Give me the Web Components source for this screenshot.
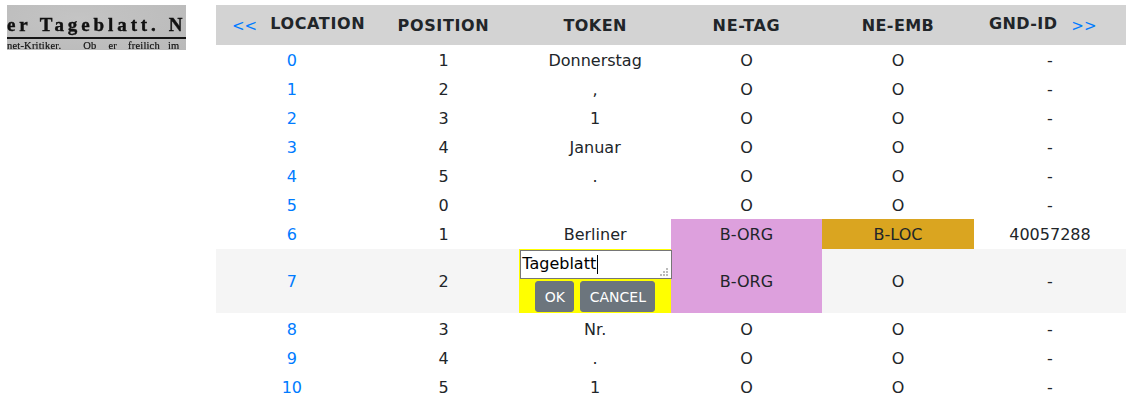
<!DOCTYPE html>
<html><head><meta charset="utf-8"><style>
html,body{margin:0;padding:0;background:#fff}
body{font-family:"DejaVu Sans",sans-serif;font-size:16px;color:#212529;width:1130px;height:400px;overflow:hidden}
</style></head><body>
<ner-app>
  <scan-thumb slot="thumb"></scan-thumb>
  <ner-table slot="table">
    <ner-head></ner-head>
    <ner-row loc="0" pos="1" tok="Donnerstag" style="--pt:2px"></ner-row>
    <ner-row loc="1" pos="2" tok="," style="--pt:2px"></ner-row>
    <ner-row loc="2" pos="3" tok="1" style="--pt:2px"></ner-row>
    <ner-row loc="3" pos="4" tok="Januar" style="--pt:2px"></ner-row>
    <ner-row loc="4" pos="5" tok="." style="--pt:2px"></ner-row>
    <ner-row loc="5" pos="0" tok="" style="--pt:2px"></ner-row>
    <ner-row loc="6" pos="1" tok="Berliner" tag="B-ORG" emb="B-LOC" gnd="40057288" style="--h:30px"></ner-row>
    <ner-row loc="7" pos="2" tag="B-ORG" editing style="--h:64px"></ner-row>
    <ner-row loc="8" pos="3" tok="Nr." style="--pt:3px"></ner-row>
    <ner-row loc="9" pos="4" tok="." style="--pt:3px"></ner-row>
    <ner-row loc="10" pos="5" tok="1" style="--pt:3px"></ner-row>
  </ner-table>
</ner-app>
<script>
const T=(html)=>{const t=document.createElement('template');t.innerHTML=html;return t};
class NerApp extends HTMLElement{constructor(){super();this.attachShadow({mode:'open'}).append(T(`<style>
:host{display:flex;align-items:flex-start;padding:5px 4px 0 7px;height:395px;box-sizing:border-box}
.l{width:209px;flex:none}.r{flex:1;min-width:0}
</style><div class="l"><slot name="thumb"></slot></div><div class="r"><slot name="table"></slot></div>`).content)}}
class ScanThumb extends HTMLElement{constructor(){super();this.attachShadow({mode:'open'}).append(T(`<style>
:host{display:block;width:179px;height:45px;overflow:hidden;background:radial-gradient(ellipse at 40% 30%,#c4c4c4,#b9b9b9);color:#111;font-family:"Liberation Serif",serif;white-space:nowrap}
.a{font-weight:700;font-size:19px;line-height:20px;padding-top:10px;letter-spacing:3.9px;word-spacing:0;-webkit-text-stroke:.4px #111;filter:blur(.4px)}
.n{margin-left:9px}
.rule{height:2px;background:#161616;margin-top:2px}
.b{display:flex;font-size:10.5px;letter-spacing:.2px;-webkit-text-stroke:.2px #111;line-height:8px;padding-top:3px;filter:blur(.4px)}
.b span:nth-child(2){margin-left:22px}.b span:nth-child(3){margin-left:12px}.b span:nth-child(4){margin-left:11px}.b span:nth-child(5){margin-left:8px}
</style><div class="a">er Tageblatt.<span class="n">N</span></div><div class="rule"></div><div class="b"><span>net-Kritiker.</span><span>Ob</span><span>er</span><span>freilich</span><span>im</span></div>`).content)}}
class NerTable extends HTMLElement{constructor(){super();this.attachShadow({mode:'open'}).append(T(`<style>:host{display:block;width:910px}</style><slot></slot>`).content)}}
const gridCss=`:host{display:grid;grid-template-columns:151.67px 151.67px 151.66px 151px 152px 152px;align-items:stretch}`;
class NerHead extends HTMLElement{constructor(){super();this.attachShadow({mode:'open'}).append(T(`<style>${gridCss}
:host{background:#d3d3d3;height:40px;font-weight:700;font-size:16px;letter-spacing:.4px}
.c{display:flex;align-items:center;justify-content:center}
.up{padding-bottom:3px;box-sizing:border-box}
.w{letter-spacing:.65px}
a{color:#007bff;font-weight:400;font-size:15px;letter-spacing:0;text-decoration:none;padding-top:4px}
.x{justify-content:flex-start;padding-left:16px;gap:13px}
.y{justify-content:flex-start;padding-left:15px;gap:14px}
</style>
<div class="c up x"><a href="#">&lt;&lt;</a><span class="w">LOCATION</span></div>
<div class="c w">POSITION</div><div class="c">TOKEN</div><div class="c w">NE-TAG</div><div class="c">NE-EMB</div>
<div class="c up y"><span>GND-ID</span><a href="#">&gt;&gt;</a></div>`).content)}}
class NerRow extends HTMLElement{constructor(){super();this.attachShadow({mode:'open'});}
connectedCallback(){const g=n=>this.getAttribute(n);const ed=this.hasAttribute('editing');
const tag=g('tag')||'O',emb=g('emb')||'O',gnd=g('gnd')||'-';
const col={'B-ORG':'#dda0dd','B-LOC':'#daa520'};
const sty=v=>col[v]?` style="background:${col[v]}"`:'';
const tok=ed?`<div class="c ed"><div class="box"><textarea spellcheck="false">Tageblatt</textarea><i class="caret"></i><svg class="grip" width="8" height="8" viewBox="0 0 8 8" fill="#bbb"><rect x="6" y="0" width="2" height="2"/><rect x="3" y="3" width="2" height="2"/><rect x="6" y="3" width="2" height="2"/><rect x="0" y="6" width="2" height="2"/><rect x="3" y="6" width="2" height="2"/><rect x="6" y="6" width="2" height="2"/></svg></div><div class="btns"><button>OK</button><button>CANCEL</button></div></div>`:`<div class="c">${g('tok')||''}</div>`;
this.shadowRoot.append(T(`<style>${gridCss}
:host{height:var(--h,29px)}
:host([editing]){background:#f5f5f5}
.c{display:flex;align-items:center;justify-content:center;padding-top:var(--pt,0);box-sizing:border-box;min-width:0}
a{color:#007bff;text-decoration:none}
.ed{background:#ff0;flex-direction:column;align-items:stretch;justify-content:flex-start;padding:1px 0 0 1px}
.box{position:relative;margin-right:-1px}
textarea{display:block;box-sizing:border-box;width:100%;height:29px;margin:0;padding:1px 1px;border:1px solid #767676;font:inherit;font-size:16px;line-height:24px;color:#000;background:#fff;outline:none;border-radius:0;overflow:hidden;resize:none;caret-color:transparent}
.caret{position:absolute;left:77px;top:5px;width:1px;height:19px;background:#000}
.grip{position:absolute;right:4px;bottom:3px}
.btns{display:flex;justify-content:flex-start;gap:6px;margin:2px 0 0 15px}
button{font:inherit;font-size:14px;height:31px;padding:0;border:1px solid #6c757d;background:#6c757d;color:#fff;border-radius:3px;width:39px}
button+button{width:75px}
</style><div class="c"><a href="#">${g('loc')}</a></div><div class="c">${g('pos')}</div>${tok}
<div class="c"${sty(tag)}>${tag}</div><div class="c"${sty(emb)}>${emb}</div><div class="c">${gnd}</div>`).content);
}}
customElements.define('ner-app',NerApp);customElements.define('scan-thumb',ScanThumb);customElements.define('ner-table',NerTable);customElements.define('ner-head',NerHead);customElements.define('ner-row',NerRow);
</script></body></html>
